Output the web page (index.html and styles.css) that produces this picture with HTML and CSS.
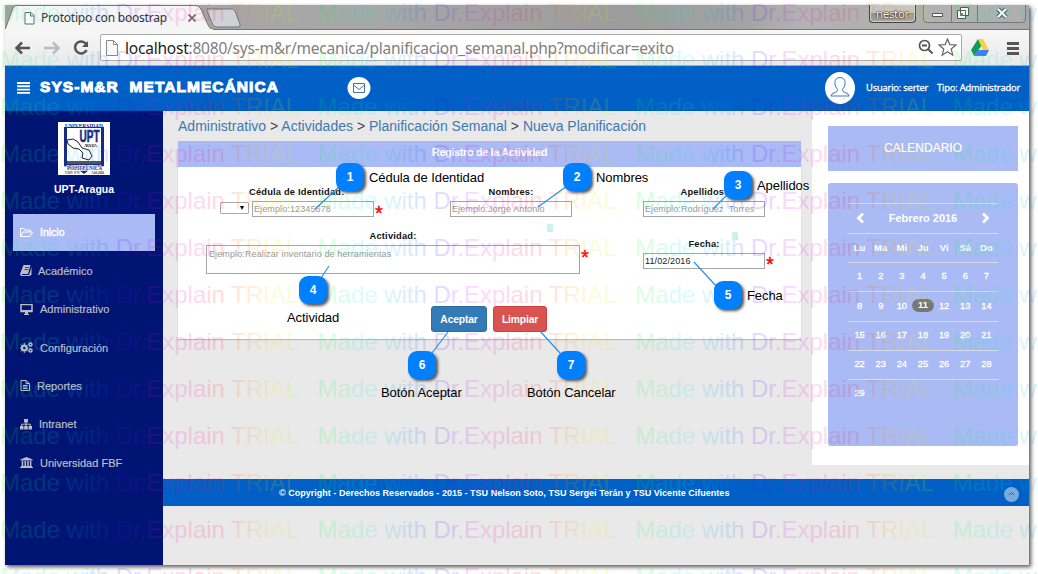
FILE: index.html
```html
<!DOCTYPE html>
<html lang="es">
<head>
<meta charset="utf-8">
<title>Prototipo con boostrap</title>
<link rel="stylesheet" href="styles.css">
</head>
<body>
<div class="window">
  <div class="tabbar">
    <svg class="tabs" width="240" height="25" viewBox="0 0 240 25">
      <path d="M202 4H227Q229 4 230 6L235 19Q236 22 233 22H212Q209 22 208 20L202 6Q201 4 203 4Z" fill="#ccd2d8" stroke="#777"/>
      <path d="M0 25L8 3Q9 .5 12 .5H190Q194 .5 196 4L203 20Q205 24.500 209 24.500V25Z" fill="#f5f5f5" stroke="#777"/>
      <path d="M0 24.500H208" stroke="#f5f5f5"/>
      <path d="M20 7.500h6l3 3v8.500h-9zM25.500 8v3h3" fill="#fff" stroke="#666"/>
      <path d="M183.500 9.500l7 7M190.500 9.500l-7 7" stroke="#666" stroke-width="1.700"/>
    </svg>
    <span class="tab-title">Prototipo con boostrap</span>
    <span class="profile">nestor</span>
    <svg class="winctl" width="103" height="18" viewBox="0 0 103 18">
      <path d="M.5 0V14Q.5 17.500 4 17.500H99Q102.500 17.500 102.500 14V0M28.500 0V17M54.500 0V17" fill="#bbb" fill-opacity=".35" stroke="#777"/>
      <path d="M9.500 8.500h10v3h-10z" fill="#fff" stroke="#555"/>
      <path d="M37.500 2.500h8v8h-8zM34.500 5.500h8v8h-8z" fill="#fff" stroke="#555"/><path d="M37 8h3v3h-3z" fill="#777"/>
      <path d="M75 4l8 8M83 4l-8 8" stroke="#555" stroke-width="4.500"/><path d="M75 4l8 8M83 4l-8 8" stroke="#fff" stroke-width="2.300"/>
    </svg>
  </div>
  <div class="toolbar">
    <svg class="nav" width="90" height="36" viewBox="0 0 90 36" fill="none">
      <path d="M25 18H12M17 12.500L11.500 18l5.500 5.500" stroke="#555" stroke-width="2.500"/>
      <path d="M39 18H53M48 12.500l5.500 5.500-5.500 5.500" stroke="#bbb" stroke-width="2.500"/>
      <path d="M81 14A6 6 0 1 0 81.500 20" stroke="#555" stroke-width="2.500"/><path d="M83 11v6h-6z" fill="#555"/>
    </svg>
    <div class="address">
      <svg width="12" height="16" viewBox="0 0 12 16"><path d="M.5.500h7l4 4v11H.5zM7.500.500v4h4" fill="#f8f8f8" stroke="#888"/></svg>
      <span class="url"><b>localhost</b>:8080/sys-m&amp;r/mecanica/planificacion_semanal.php?modificar=exito</span>
      <svg class="star" width="42" height="20" viewBox="0 0 42 20" fill="none" stroke="#555">
        <circle cx="8.500" cy="7.500" r="5" stroke-width="1.700"/><path d="M6 7.500h5M12 11l4.500 4.500" stroke-width="1.800"/>
        <path d="M31.500 1l2.300 5.600 6.200.4-4.800 4 1.600 6.200-5.300-3.400-5.300 3.400 1.600-6.200-4.800-4 6.200-.4z" stroke="#666" stroke-width="1.200"/>
      </svg>
    </div>
    <svg class="drive" width="50" height="18" viewBox="0 0 50 18">
      <path d="M7 0L0 11l3 6L11 6z" fill="#109d58"/><path d="M7 0h5l6 11h-6z" fill="#ffcf41"/><path d="M6.500 11H18l-3 6H3z" fill="#3d82f5"/>
      <path d="M36 4.500h12M36 9.500h12M36 14.500h12" stroke="#555" stroke-width="3"/>
    </svg>
  </div>

  <header class="header">
    <svg width="14" height="12" viewBox="0 0 14 12"><path d="M0 1h13M0 4.300h13M0 7.600h13M0 10.900h13" stroke="#fff" stroke-width="1.900"/></svg>
    <h1 class="brand">SYS-M&amp;R&nbsp; METALMECÁNICA</h1>
    <svg class="mail" width="24" height="22" viewBox="0 0 24 22"><ellipse cx="12" cy="11" rx="11.500" ry="11" fill="#fff"/><path d="M6.500 6.500h11v9h-11zM6.500 8l5.500 4.500L17.500 8" fill="none" stroke="#4a72ad"/></svg>
    <svg class="avatar" width="30" height="32" viewBox="0 0 30 32"><ellipse cx="15" cy="16" rx="15" ry="16" fill="#fff"/><path d="M12.500 17.500Q9.500 14 9.800 10.500 10.500 5.500 15 5.500T20.200 10.500Q20.500 14 17.500 17.500 17.500 20 20 20.500 24 21.500 24 24H6Q6 21.500 10 20.500 12.500 20 12.500 17.500Z" fill="none" stroke="#3877bc"/></svg>
    <span class="user">Usuario: serter</span><span class="role">Tipo: Administrador</span>
  </header>

  <div class="body">
    <nav class="sidebar">
      <svg class="logo" width="52" height="53" viewBox="0 0 52 53" font-family="Liberation Serif, serif" font-weight="bold" fill="#172b86">
        <path d="M0 0h52v53H0z" fill="#fff"/>
        <path d="M6 5V44L21 48 26 52 31 48 46 44V5" fill="#172b86"/><path d="M9 6h34v36H9z" fill="#fff"/>
        <text x="7" y="5.500" font-size="6" textLength="38" lengthAdjust="spacingAndGlyphs">UNIVERSIDAD</text>
        <text x="21.500" y="20" font-size="16" font-family="Liberation Sans, sans-serif" stroke="#172b86" stroke-width=".6" textLength="20" lengthAdjust="spacingAndGlyphs">UPT</text>
        <text x="26" y="25" font-size="4" fill="#222" textLength="13">ARAGUA</text>
        <path d="M9 18l6-1 5 3 4 6 7 2 3 6-3 4-7-2 1-5-4-4-6-1-5-4z" fill="#fff" stroke="#222"/>
        <path d="M9 39h34v3H9z" fill="#555"/>
        <text x="9" y="48" font-size="6" stroke="#fff" stroke-width="1.500" paint-order="stroke" textLength="35" lengthAdjust="spacingAndGlyphs">POLITECNICA</text>
        <text x="7" y="52" font-size="4" fill="#555">UBV PN</text><text x="33" y="52" font-size="4" fill="#555" textLength="13">A-01-2010</text>
      </svg>
      <div class="school">UPT-Aragua</div>
      <ul class="menu">
        <li class="active"><svg viewBox="0 0 13 11"><path d="M.5 9.500V1.500h3.500l1 1.500h5v2M.7 9.500L3 5h9.500l-2.500 4.500z" fill="none" stroke="currentColor"/></svg><span>Inicio</span></li>
        <li class="book"><svg viewBox="0 0 13 11"><path d="M3.500 0h7L8 9H2v1h7l2.500-8V10L9 11H1L0 9z" /><path d="M5 2.500h4M4.500 4.500h4" stroke="#001474" stroke-width=".7"/></svg><span>Académico</span></li>
        <li><svg viewBox="0 0 13 11"><path d="M1 .5h11v7H1z" fill="none" stroke="currentColor" stroke-width="1.500"/><path d="M1 6h11v2H1zM5 8h3v2h1v1H4v-1h1z"/></svg><span>Administrativo</span></li>
        <li><svg viewBox="0 0 13 11" fill="none"><circle cx="4.300" cy="6" r="2.500" stroke="currentColor" stroke-width="2"/><path d="M4.300 1v10M-.5 6h9M1 2.600l6.700 6.800M7.700 2.600L1 9.400" stroke="currentColor"/><circle cx="4.300" cy="6" r="1.300" fill="#001474"/><circle cx="10.500" cy="2.600" r="1.500" fill="#001474" stroke="currentColor" stroke-width="1.500"/><circle cx="10.500" cy="8.600" r="1.500" fill="#001474" stroke="currentColor" stroke-width="1.500"/></svg><span>Configuración</span></li>
        <li class="report"><svg viewBox="0 0 13 11"><path d="M1 .5h5l3.500 3v7H1zM6 .5v3h3.500M3 5.500h4.500M3 7h4.500M3 8.500h4.500" fill="none" stroke="currentColor"/></svg><span>Reportes</span></li>
        <li class="net"><svg viewBox="0 0 13 11"><path d="M4 0h4v3.500H4zM0 7h3.500v3.500H0zM4.200 7h3.500v3.500H4.200zM8.500 7H12v3.500H8.500z"/><path d="M6 3v4M1.700 7V5.200h8.600V7" fill="none" stroke="currentColor"/></svg><span>Intranet</span></li>
        <li><svg viewBox="0 0 13 11"><path d="M6.500 0l6 2.500v1H.5v-1zM1 9h11v1H1zM0 10h13v1H0z"/><path d="M2.500 4v5M5.200 4v5M7.900 4v5M10.600 4v5" stroke="currentColor" stroke-width="1.500"/></svg><span>Universidad FBF</span></li>
      </ul>
    </nav>

    <div class="page">
      <div class="columns">
        <main class="main">
          <div class="crumbs"><a>Administrativo</a> &gt; <a>Actividades</a> &gt; <a>Planificación Semanal</a> &gt; <a>Nueva Planificación</a></div>
          <section class="card">
            <h2 class="card-title">Registro de la Actividad</h2>
            <div class="form-row first">
              <div class="select"><i></i></div>
              <div class="field cedula"><label>Cédula de Identidad:</label><div class="input">Ejemplo:12345678</div></div>
              <span class="req">*</span>
              <div class="field nombres"><label>Nombres:</label><div class="input">Ejemplo:Jorge Antonio</div></div>
              <div class="field apellidos"><label>Apellidos:</label><div class="input">Ejemplo:Rodríguez&nbsp; Torres</div></div>
            </div>
            <div class="form-row second">
              <div class="field activity"><label>Actividad:</label><div class="input area">Ejemplo:Realizar inventario de herramientas</div></div>
              <span class="req">*</span>
              <div class="field date"><label>Fecha:</label><div class="input filled">11/02/2016</div></div>
              <span class="req date-req">*</span>
            </div>
            <div class="actions"><button class="btn accept">Aceptar</button><button class="btn clear">Limpiar</button></div>
          </section>
        </main>
        <aside class="aside">
          <div class="cal-title">CALENDARIO</div>
          <div class="calendar">
            <div class="cal-head"><svg width="9" height="12" viewBox="0 0 9 12"><path d="M7 1.500L2.500 6 7 10.500" fill="none" stroke="#fff" stroke-width="2.800"/></svg><b>Febrero 2016</b><svg width="9" height="12" viewBox="0 0 9 12"><path d="M2 1.500L6.500 6 2 10.500" fill="none" stroke="#fff" stroke-width="2.800"/></svg></div>
            <div class="week days"><span>Lu</span><span>Ma</span><span>Mi</span><span>Ju</span><span>Vi</span><span>Sá</span><span>Do</span></div>
            <div class="week"><span>1</span><span>2</span><span>3</span><span>4</span><span>5</span><span>6</span><span>7</span></div>
            <div class="week tall"><span>8</span><span>9</span><span>10</span><span class="today">11</span><span>12</span><span>13</span><span>14</span></div>
            <div class="week"><span>15</span><span>16</span><span>17</span><span>18</span><span>19</span><span>20</span><span>21</span></div>
            <div class="week"><span>22</span><span>23</span><span>24</span><span>25</span><span>26</span><span>27</span><span>28</span></div>
            <div class="week"><span>29</span></div>
          </div>
        </aside>
      </div>
      <footer class="footer"><span>© Copyright - Derechos Reservados - 2015 - TSU Nelson Soto, TSU Sergei Terán y TSU Vicente Cifuentes</span>
        <svg class="top" width="15" height="15" viewBox="0 0 15 15"><circle cx="7.500" cy="7.500" r="7.500" fill="#78a9df"/><path d="M5 8l2.500-2.500L10 8" fill="none" stroke="#456"/></svg>
      </footer>
    </div>
  </div>
</div>

<svg class="watermark" width="1038" height="574" viewBox="0 0 1038 574">
  <defs><linearGradient id="hue" gradientUnits="userSpaceOnUse" x1="2" y1="0" x2="319.600" y2="0" spreadMethod="repeat">
    <stop offset="0" stop-color="#00ff30"/><stop offset=".17" stop-color="#00f0f0"/><stop offset=".31" stop-color="#0060ff"/><stop offset=".38" stop-color="#4000ff"/><stop offset=".49" stop-color="#e800ff"/><stop offset=".67" stop-color="#ff0030"/><stop offset=".76" stop-color="#ff7000"/><stop offset=".86" stop-color="#ffe800"/><stop offset=".94" stop-color="#90ff00"/><stop offset="1" stop-color="#00ff30"/>
  </linearGradient></defs>
  <g class="marks" fill="url(#hue)"></g>
</svg>

<svg class="leaders" width="1038" height="574" viewBox="0 0 1038 574">
  <path d="M340 186L315 209M567 186L538 207M728 194L713 209M321 278L329 266M718 288L694 262M432 353L448 332M560 353L540 331" fill="none" stroke="#2a90f0" stroke-width="1.200"/>
  <path d="M547 224h6v7h-6zM732 232h6v7h-6z" fill="#cbf2f0"/><path d="M548 231.500h5M733 239.500h5" stroke="#ddd"/>
</svg>
<b class="callout c1">1</b><span class="note n1">Cédula de Identidad</span>
<b class="callout c2">2</b><span class="note n2">Nombres</span>
<b class="callout c3">3</b><span class="note n3">Apellidos</span>
<b class="callout c4">4</b><span class="note n4">Actividad</span>
<b class="callout c5">5</b><span class="note n5">Fecha</span>
<b class="callout c6">6</b><span class="note n6">Botón Aceptar</span>
<b class="callout c7">7</b><span class="note n7">Botón Cancelar</span>
<script src="marks.js"></script>
</body>
</html>
```
FILE: marks.js
```js
// Fills the watermark layer with evenly spaced rows of the trial notice.
const marks = document.querySelector('.marks');
for (let y = 21; y < 600; y += 47) {
  for (let i = 0; i < 4; i++) {
    const t = document.createElementNS('http://www.w3.org/2000/svg', 'text');
    t.setAttribute('x', i * 317.6);
    t.setAttribute('y', y);
    t.setAttribute('textLength', 299);
    t.textContent = 'Made with Dr.Explain TRIAL';
    marks.append(t);
  }
}
```
FILE: styles.css
```css
* { box-sizing: border-box; }
body { margin: 0; width: 1038px; height: 574px; overflow: hidden; padding: 5px 9px 9px 5px; background: #fff; font-family: "Liberation Sans", Arial, sans-serif; }
svg { display: block; flex: none; }
.window { width: 1024px; height: 560px; display: flex; flex-direction: column; box-shadow: 2px 2px 4px #555; background: #e9e9e9; }
.tabbar { height: 25px; flex: none; display: flex; align-items: flex-start; background: linear-gradient(100deg, #a2a2a2, #a8a8a8 35%, #9c9c9c 60%, #a3a3a3 72%, #b3b3b3 78%, #a9a9a9); border-bottom: 1px solid #777; }
.tabs { margin-bottom: -1px; }
.tab-title { font: 12px "Noto Sans", sans-serif; letter-spacing: -.2px; line-height: 25px; color: #333; margin-left: -204px; width: 160px; white-space: nowrap; }
.profile { margin-left: auto; margin-right: 4px; width: 47px; height: 18px; border: 1px solid #444; border-top: 0; border-radius: 0 0 4px 4px; background: linear-gradient(#c4c4c4 45%, #929292 50%, #aaa); box-shadow: inset 0 0 0 1px #ccc; color: #fff; text-shadow: 0 0 2px #000, 0 0 1px #000; font: 11.5px/17px "Noto Sans", sans-serif; letter-spacing: -.3px; text-align: center; }
.profile + .winctl { margin-left: 3px; }
.winctl { margin-right: 3px; }
.toolbar { height: 36px; flex: none; display: flex; align-items: center; background: linear-gradient(#f7f7f7, #e9e9e9); border-bottom: 1px solid #aaa; }
.nav { margin-right: 5px; }
.address { height: 27px; width: 862px; border: 1px solid #aaa; border-radius: 2px; background: #fff; display: flex; align-items: center; padding-left: 5px; }
.url { font: 15.5px/24px "Noto Sans", sans-serif; letter-spacing: -.22px; color: #808080; margin-left: 7px; white-space: nowrap; width: 551px; }
.url b { font-weight: 400; color: #222; }
.star { margin-left: auto; margin-right: 3px; }
.drive { margin-left: 9px; }
.header { height: 45px; flex: none; background: #0060c5; display: flex; align-items: center; padding-left: 12px; color: #fff; border-bottom: 1px solid #0058b8; }
.brand { margin: -2px 0 0 9px; font-size: 15.5px; font-weight: 700; letter-spacing: 1.05px; -webkit-text-stroke: 1px #fff; width: 308px; white-space: nowrap; }
.avatar { margin-left: auto; }
.mail { margin-left: -1px; }
.user, .role { font: 9.3px "Open Sans", sans-serif; letter-spacing: -.15px; margin-top: -2px; -webkit-text-stroke: .3px #fff; white-space: nowrap; }
.user { margin-left: 11px; width: 71px; }
.role { width: 92px; }
.body { flex: 1; display: flex; min-height: 0; }
.sidebar { width: 158px; background: #001474; display: flex; flex-direction: column; align-items: center; color: #fff; }
.logo { margin-top: 11px; }
.school { font-size: 10.5px; font-weight: 700; line-height: 14px; margin-top: 7px; }
.menu { list-style: none; margin: 18px 0 0; padding: 0; width: 142px; display: flex; flex-direction: column; gap: 1.350px; }
.menu li { height: 37px; display: flex; align-items: center; padding-left: 7px; font-size: 11px; font-weight: 400; letter-spacing: .03px; color: #bdbdc4; -webkit-text-stroke: .2px currentColor; }
.menu svg { width: 13px; height: 11px; fill: currentColor; -webkit-text-stroke: 0; }
.menu span { margin-left: 7px; }
.menu .active { background: #aabaf5; color: #fff; font-size: 10.5px; letter-spacing: 0; -webkit-text-stroke: .4px #fff; padding-bottom: 1px; }
.menu .book span { margin-left: 5px; }
.menu .report span { margin-left: 4px; }
.menu .net span { margin-left: 6px; }
.page { flex: 1; display: flex; flex-direction: column; }
.columns { display: flex; height: 368px; }
.main { width: 649px; padding: 6px 11px 0 15px; }
.crumbs { font-size: 14px; line-height: 18px; color: #444; letter-spacing: .01px; white-space: nowrap; }
.crumbs a { color: #4078b0; }
.card { height: 198px; margin-top: 6px; background: #fff; box-shadow: 0 1px 1px #bbb; }
.card-title { margin: 0; height: 26px; background: #aabaf5; color: #fff; text-align: center; font-size: 11px; font-weight: 700; line-height: 23px; letter-spacing: -.4px; }
.form-row { display: flex; }
.first { height: 60px; padding: 18px 0 0 42px; }
.select { width: 29px; height: 12px; margin-top: 17px; margin-right: 3px; border: 1px solid #aaa; border-radius: 1px; display: flex; justify-content: flex-end; align-items: center; padding-right: 4px; }
.select i { border: 2.500px solid transparent; border-top: 4px solid #000; border-bottom: 0; }
.field { width: 122px; }
.field label { display: block; font-size: 9.300px; font-weight: 700; line-height: 15px; letter-spacing: .2px; text-align: center; white-space: nowrap; margin-bottom: 1px; color: #111; }
.cedula label { text-align: left; margin-left: -3px; }
.input { height: 16px; border: 1px solid #a5a5a5; padding-left: 1px; color: #999; font-size: 9px; line-height: 15px; letter-spacing: .12px; white-space: nowrap; }
.filled { color: #222; }
.req { color: #f00; font-size: 20px; line-height: 20px; width: 8px; margin-top: 18px; margin-left: 1px; -webkit-text-stroke: .4px #f00; }
.nombres { margin-left: 67px; }
.apellidos { margin-left: 71px; }
.second { padding: 2px 0 0 28px; height: 77px; }
.activity { width: 374px; }
.area { height: 29px; padding: 1px 2px; }
.date { margin-left: 54px; margin-top: 8px; }
.date-req { margin-top: 25px; }
.actions { display: flex; gap: 6px; padding-left: 253px; margin-top: 2px; }
.btn { height: 26px; padding: 0; border-radius: 3px; color: #fff; font: 700 10.300px "Liberation Sans", Arial, sans-serif; letter-spacing: -.15px; }
.accept { width: 56px; background: #337ab7; border: 1px solid #2e6da4; }
.clear { width: 54px; background: #d9534f; border: 1px solid #d43f3a; }
.aside { width: 217px; height: 354px; background: #fff; padding: 15px 11px 0 16px; }
.cal-title { height: 45px; background: #aabaf5; color: #fff; font-size: 12px; line-height: 44px; text-align: center; margin-bottom: 12px; -webkit-text-stroke: .2px #fff; }
.calendar { height: 263px; background: #aabaf5; border-radius: 3px; padding: 20px 20px 0; color: #fff; }
.cal-head { height: 30px; border-top: 1px solid #d8dbe2; display: flex; align-items: center; justify-content: space-between; padding: 0 8px 1px; font-size: 11px; }
.week { height: 29px; border-top: 1px solid #d8dbe2; display: grid; grid-template-columns: repeat(7, 1fr); padding: 0 1px 2px; align-items: center; text-align: center; font-size: 9.300px; -webkit-text-stroke: .3px #fff; }
.week.tall { height: 30px; }
.days { font-weight: 700; font-size: 9.500px; -webkit-text-stroke: 0; }
.today { background: #777; border-radius: 7px; font-weight: 700; line-height: 13px; -webkit-text-stroke: 0; }
.footer { height: 27px; background: #0060c5; color: #fff; display: flex; align-items: center; justify-content: space-between; padding: 0 10px 0 116px; font-size: 9px; font-weight: 700; letter-spacing: .02px; white-space: nowrap; }
.top { margin-top: 4px; }
.watermark, .leaders { position: absolute; left: 0; top: 0; pointer-events: none; }
.marks { font: 24px "Liberation Sans", Arial, sans-serif; opacity: .14; }
.callout { position: absolute; width: 28px; height: 28px; border-radius: 9px; background: #0080ff; color: #fff; box-shadow: 2px 2px 3px #555; font-size: 12px; line-height: 28px; text-align: center; }
.note { position: absolute; font-size: 13px; line-height: 16px; letter-spacing: -.07px; white-space: nowrap; color: #000; }
.c1 { left: 336px; top: 163px; }
.c2 { left: 563px; top: 163px; }
.c3 { left: 724px; top: 171px; }
.c4 { left: 299px; top: 276px; }
.c5 { left: 714px; top: 281px; }
.c6 { left: 408px; top: 351px; }
.c7 { left: 557px; top: 351px; }
.n1 { left: 369px; top: 170px; }
.n2 { left: 596px; top: 170px; }
.n3 { left: 757px; top: 178px; }
.n4 { left: 287px; top: 310px; }
.n5 { left: 747px; top: 288px; }
.n6 { left: 381px; top: 385px; }
.n7 { left: 527px; top: 385px; }
```
